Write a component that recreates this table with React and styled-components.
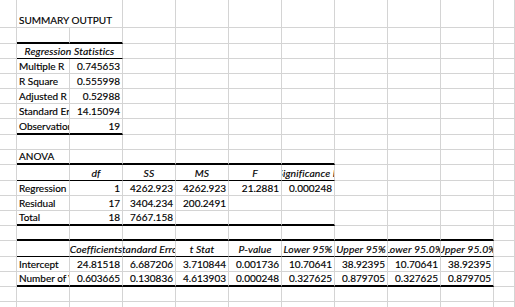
import styled, { createGlobalStyle } from "styled-components";

const GRID = "#d4d4d4";

const GlobalStyle = createGlobalStyle`
  html, body {
    margin: 0;
    padding: 0;
    background: #fff;
  }
  body {
    font-family: Lato, "Liberation Sans", sans-serif;
    font-size: 10px;
    color: #000;
  }
`;

const Sheet = styled.div`
  display: grid;
  grid-template-columns: 17px repeat(9, 53px) 1fr;
  grid-template-rows: ${(p) => p.$rows};
  width: 100%;
  height: 307px;
  overflow: hidden;
`;

const justify = { left: "flex-start", right: "flex-end", center: "center" };

const rules = {
  thick: "2px solid #000",
  thin: "1px solid #000",
  none: `1px solid ${GRID}`,
};

const Cell = styled.div`
  grid-column: span ${(p) => p.$span};
  display: flex;
  align-items: flex-end;
  justify-content: ${(p) => justify[p.$align]};
  overflow: hidden;
  white-space: nowrap;
  box-sizing: border-box;
  padding: 0 2px 1px 2px;
  line-height: 12px;
  border-right: 1px solid ${GRID};
  border-bottom: ${(p) => rules[p.$rule]};
  font-style: ${(p) => (p.$italic ? "italic" : "normal")};
  font-size: ${(p) => (p.$italic ? "10.4px" : "10px")};
  letter-spacing: ${(p) => (p.$italic ? "0.12px" : "0")};
  -webkit-text-stroke: 0.15px #000;
`;

const label = (c, t, extra = {}) => ({ c, t, ...extra });
const nums = (start, values) => values.map((t, k) => ({ c: start + k, t, a: "right" }));
const heads = (start, values) => values.map((t, k) => ({ c: start + k, t, a: "center", i: true }));

const rows = [
  { h: 28, cells: [label(1, "SUMMARY OUTPUT", { s: 2 })] },
  { h: 16, cells: [], rule: [1, 2, "thick"] },
  { h: 15, cells: [label(1, "Regression Statistics", { s: 2, a: "center", i: true })], rule: [1, 2, "thin"] },
  { h: 15, cells: [label(1, "Multiple R"), ...nums(2, ["0.745653"])] },
  { h: 15, cells: [label(1, "R Square"), ...nums(2, ["0.555998"])] },
  { h: 15, cells: [label(1, "Adjusted R Square"), ...nums(2, ["0.52988"])] },
  { h: 15, cells: [label(1, "Standard Error"), ...nums(2, ["14.15094"])] },
  { h: 16, cells: [label(1, "Observations"), ...nums(2, ["19"])], rule: [1, 2, "thick"] },
  { h: 15, cells: [] },
  { h: 15, cells: [label(1, "ANOVA")], rule: [1, 6, "thick"] },
  { h: 16, cells: heads(2, ["df", "SS", "MS", "F", "Significance F"]), rule: [1, 6, "thin"] },
  { h: 15, cells: [label(1, "Regression"), ...nums(2, ["1", "4262.923", "4262.923", "21.2881", "0.000248"])] },
  { h: 15, cells: [label(1, "Residual"), ...nums(2, ["17", "3404.234", "200.2491"])] },
  { h: 15, cells: [label(1, "Total"), ...nums(2, ["18", "7667.158"])], rule: [1, 6, "thick"] },
  { h: 15, cells: [], rule: [1, 9, "thick"] },
  {
    h: 16,
    cells: heads(2, [
      "Coefficients",
      "Standard Error",
      "t Stat",
      "P-value",
      "Lower 95%",
      "Upper 95%",
      "Lower 95.0%",
      "Upper 95.0%",
    ]),
    rule: [1, 9, "thin"],
  },
  {
    h: 15,
    cells: [
      label(1, "Intercept"),
      ...nums(2, ["24.81518", "6.687206", "3.710844", "0.001736", "10.70641", "38.92395", "10.70641", "38.92395"]),
    ],
  },
  {
    h: 15,
    cells: [
      label(1, "Number of Visits"),
      ...nums(2, ["0.603665", "0.130836", "4.613903", "0.000248", "0.327625", "0.879705", "0.327625", "0.879705"]),
    ],
    rule: [1, 9, "thick"],
  },
  { h: 15, cells: [] },
  { h: 15, cells: [] },
];

const COLS = 11;

const renderRow = (row, r) => {
  const out = [];
  let col = 0;
  while (col < COLS) {
    const cell = row.cells.find((x) => x.c === col);
    const span = cell?.s || 1;
    const ruled = row.rule && col >= row.rule[0] && col + span - 1 <= row.rule[1];
    out.push(
      <Cell
        key={`${r}-${col}`}
        $span={span}
        $align={cell?.a || "left"}
        $italic={cell?.i}
        $rule={ruled ? row.rule[2] : "none"}
      >
        {cell?.t}
      </Cell>
    );
    col += span;
  }
  return out;
};

const App = () => (
  <>
    <GlobalStyle />
    <Sheet $rows={rows.map((r) => `${r.h}px`).join(" ")}>{rows.map(renderRow)}</Sheet>
  </>
);

export default App;
